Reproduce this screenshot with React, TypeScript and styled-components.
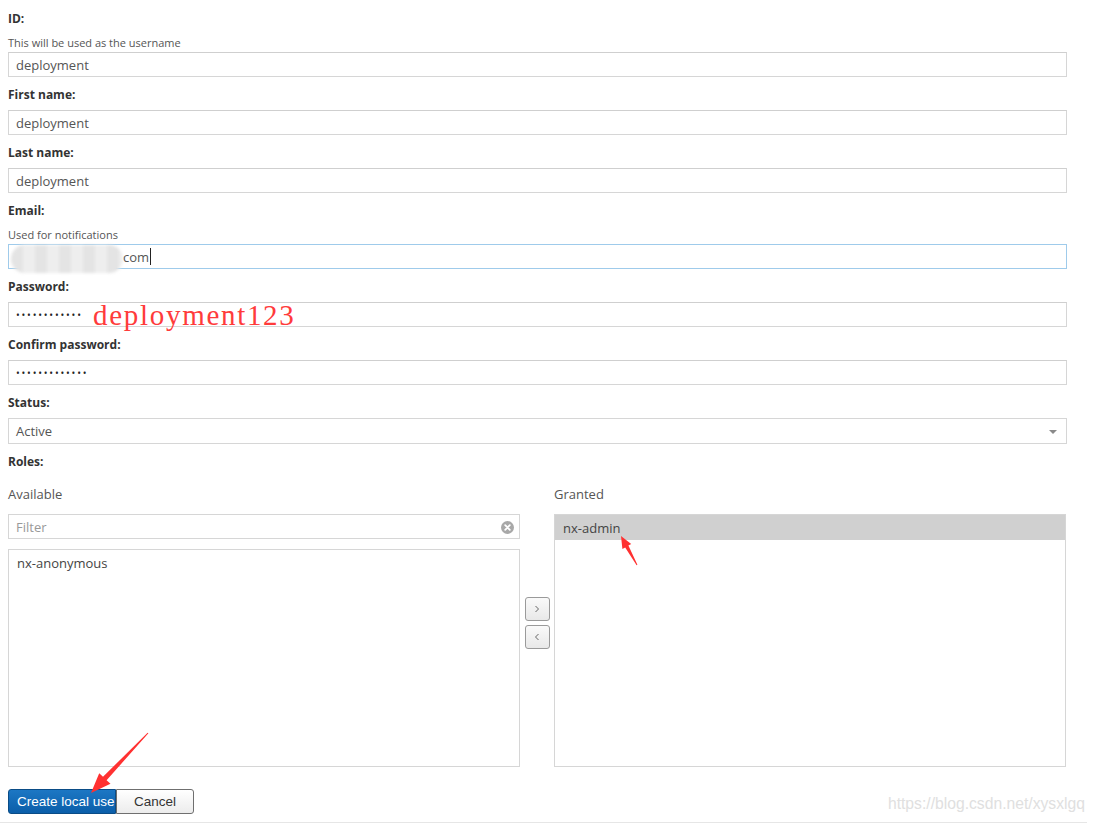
import styled, { createGlobalStyle } from 'styled-components';

const GlobalStyle = createGlobalStyle`
    html, body {
        margin: 0;
        padding: 0;
        background: #ffffff;
    }
    body {
        font-family: 'Open Sans', 'Noto Sans', sans-serif;
        color: #333333;
    }
`;

type FieldProps = {
    label: string;
    hint?: string;
    value?: string;
    masked?: boolean;
};

function Field({ label, hint, value, masked }: FieldProps) {
    return (
        <FieldBox>
            <Label>{label}</Label>
            {hint && <Hint>{hint}</Hint>}
            <Input $masked={masked}>{value}</Input>
        </FieldBox>
    );
}

function App() {
    return (
        <Page>
            <GlobalStyle />
            <Form>
                <Field label="ID:" hint="This will be used as the username" value="deployment" />
                <Field label="First name:" value="deployment" />
                <Field label="Last name:" value="deployment" />

                <FieldBox>
                    <Label>Email:</Label>
                    <Hint>Used for notifications</Hint>
                    <Input $focused>
                        <Blur />
                        <EmailText>com</EmailText>
                        <Caret />
                    </Input>
                </FieldBox>

                <FieldBox>
                    <Label>Password:</Label>
                    <Input $masked>
                        ••••••••••••
                        <Note>deployment123</Note>
                    </Input>
                </FieldBox>

                <Field label="Confirm password:" value="•••••••••••••" masked />

                <FieldBox>
                    <Label>Status:</Label>
                    <Select>
                        Active
                        <Caret2 />
                    </Select>
                </FieldBox>

                <Label>Roles:</Label>

                <Roles>
                    <RoleColumn>
                        <ColumnTitle>Available</ColumnTitle>
                        <FilterBox>
                            <span>Filter</span>
                            <ClearIcon>
                                <svg width="13" height="13" viewBox="0 0 13 13">
                                    <circle cx="6.5" cy="6.5" r="6.5" fill="#a8a8a8" />
                                    <path d="M4.2 4.2 L8.8 8.8 M8.8 4.2 L4.2 8.8" stroke="#fff" strokeWidth="1.8" strokeLinecap="round" />
                                </svg>
                            </ClearIcon>
                        </FilterBox>
                        <List $short>
                            <Item>nx-anonymous</Item>
                        </List>
                    </RoleColumn>

                    <Mover>
                        <MoveButton>
                            <svg width="6" height="8" viewBox="0 0 6 8">
                                <path d="M1.5 1 L4.5 4 L1.5 7" fill="none" stroke="#666" strokeWidth="1" />
                            </svg>
                        </MoveButton>
                        <MoveButton>
                            <svg width="6" height="8" viewBox="0 0 6 8">
                                <path d="M4.5 1 L1.5 4 L4.5 7" fill="none" stroke="#666" strokeWidth="1" />
                            </svg>
                        </MoveButton>
                    </Mover>

                    <RoleColumn>
                        <ColumnTitle>Granted</ColumnTitle>
                        <List>
                            <Item $selected>nx-admin</Item>
                        </List>
                    </RoleColumn>
                </Roles>

                <Actions>
                    <PrimaryButton>Create local use</PrimaryButton>
                    <Button>Cancel</Button>
                </Actions>
            </Form>
            <Rule />

            <Watermark>https://blog.csdn.net/xysxlgq</Watermark>

            <Arrows width="1095" height="824" viewBox="0 0 1095 824">
                <polygon
                    fill="#ff3131"
                    points="148.4,733.3 106.6,780.2 110.5,783.8 91,793 99.2,773.3 103,776.8 147.6,732.7"
                />
                <polygon
                    fill="#ff3131"
                    points="637.4,564.8 628.4,545.6 631.2,544.1 621,536 622.4,548.9 625.2,547.4 636.6,565.2"
                />
            </Arrows>
        </Page>
    );
}

const Page = styled.div`
    position: relative;
    width: 1095px;
    min-height: 824px;
`;

const Form = styled.div`
    display: flex;
    flex-direction: column;
    width: 1059px;
    padding: 9px 0 0 8px;
`;

const FieldBox = styled.div`
    display: flex;
    flex-direction: column;
    margin-bottom: 8px;
`;

const Label = styled.div`
    font-size: 12px;
    font-weight: 700;
    line-height: 17px;
    color: #333333;
    padding-top: 1px;
    margin-bottom: 7px;
`;

const Hint = styled.div`
    font-size: 11px;
    line-height: 17px;
    color: #555555;
    margin-bottom: 1px;
`;

const Input = styled.div<{ $masked?: boolean; $focused?: boolean }>`
    position: relative;
    box-sizing: border-box;
    height: 25px;
    display: flex;
    align-items: center;
    padding: 0 7px;
    border: 1px solid ${(p) => (p.$focused ? '#9fcbeb' : '#d6d6d6')};
    border-top-color: ${(p) => (p.$focused ? '#9fcbeb' : '#cfcfcf')};
    font-size: ${(p) => (p.$masked ? '10px' : '13px')};
    letter-spacing: ${(p) => (p.$masked ? '1.8px' : '0')};
    color: ${(p) => (p.$masked ? '#222222' : '#555555')};
`;

const Blur = styled.div`
    position: absolute;
    left: 2px;
    top: 0px;
    width: 112px;
    height: 28px;
    border-radius: 14px;
    background: repeating-linear-gradient(90deg, #e4e4e4 0 12px, #eeeeee 12px 24px);
    filter: blur(1.5px);
`;

const EmailText = styled.span`
    position: relative;
    margin-left: 107px;
    font-size: 13px;
    color: #555555;
`;

const Caret = styled.span`
    display: inline-block;
    width: 1px;
    height: 17px;
    margin-left: 1px;
    background: #222222;
`;

const Note = styled.span`
    position: absolute;
    left: 84px;
    top: -3px;
    font-family: 'Liberation Serif', serif;
    font-size: 29px;
    letter-spacing: 1.7px;
    color: #ff3b3b;
    line-height: 30px;
`;

const Select = styled.div`
    position: relative;
    box-sizing: border-box;
    height: 26px;
    display: flex;
    align-items: center;
    padding: 0 7px;
    border: 1px solid #d6d6d6;
    font-size: 13px;
    color: #555555;
`;

const Caret2 = styled.span`
    position: absolute;
    right: 9px;
    top: 11px;
    border-left: 4px solid transparent;
    border-right: 4px solid transparent;
    border-top: 4px solid #8a8a8a;
`;

const Roles = styled.div`
    display: grid;
    grid-template-columns: 512px 34px 512px;
    margin-top: 9px;
`;

const RoleColumn = styled.div`
    display: flex;
    flex-direction: column;
`;

const ColumnTitle = styled.div`
    font-size: 13px;
    line-height: 17px;
    color: #555555;
    margin-bottom: 11px;
`;

const FilterBox = styled.div`
    position: relative;
    box-sizing: border-box;
    height: 25px;
    display: flex;
    align-items: center;
    padding: 0 7px;
    border: 1px solid #d6d6d6;
    font-size: 13px;
    color: #999999;
    margin-bottom: 10px;
`;

const ClearIcon = styled.span`
    position: absolute;
    right: 5px;
    top: 5px;
    height: 13px;
`;

const List = styled.div<{ $short?: boolean }>`
    box-sizing: border-box;
    height: ${(p) => (p.$short ? '218px' : '253px')};
    border: 1px solid #d6d6d6;
`;

const Item = styled.div<{ $selected?: boolean }>`
    height: 25px;
    display: flex;
    align-items: center;
    padding: 0 8px;
    font-size: 13px;
    color: #444444;
    background: ${(p) => (p.$selected ? '#d0d0d0' : 'transparent')};
`;

const Mover = styled.div`
    display: flex;
    flex-direction: column;
    align-items: center;
    gap: 4px;
    padding-top: 111px;
`;

const MoveButton = styled.div`
    box-sizing: border-box;
    width: 25px;
    height: 24px;
    display: flex;
    align-items: center;
    justify-content: center;
    border: 1px solid #9a9a9a;
    border-radius: 3px;
    background: linear-gradient(#fafafa, #e8e8e8);
`;

const Actions = styled.div`
    display: flex;
    margin-top: 22px;
`;

const PrimaryButton = styled.div`
    box-sizing: border-box;
    width: 108px;
    height: 25px;
    display: flex;
    align-items: center;
    padding-left: 8px;
    overflow: hidden;
    white-space: nowrap;
    border: 1px solid #0a4c86;
    border-radius: 3px 0 0 3px;
    background: linear-gradient(#1c77c4, #0b5ea9);
    font-family: 'Liberation Sans', sans-serif;
    font-size: 13.5px;
    color: #ffffff;
`;

const Button = styled.div`
    box-sizing: border-box;
    width: 78px;
    height: 25px;
    display: flex;
    align-items: center;
    justify-content: center;
    border: 1px solid #6f6f6f;
    border-radius: 0 3px 3px 0;
    background: linear-gradient(#ffffff, #ececec);
    font-family: 'Liberation Sans', sans-serif;
    font-size: 13.5px;
    color: #333333;
`;

const Rule = styled.div`
    width: 1087px;
    height: 1px;
    margin-top: 8px;
    background: #e6e6e6;
`;

const Watermark = styled.div`
    position: absolute;
    right: 10px;
    top: 795px;
    font-family: 'Liberation Sans', sans-serif;
    font-size: 15.7px;
    color: #e0e0e0;
`;

const Arrows = styled.svg`
    position: absolute;
    left: 0;
    top: 0;
    pointer-events: none;
`;

export default App;
